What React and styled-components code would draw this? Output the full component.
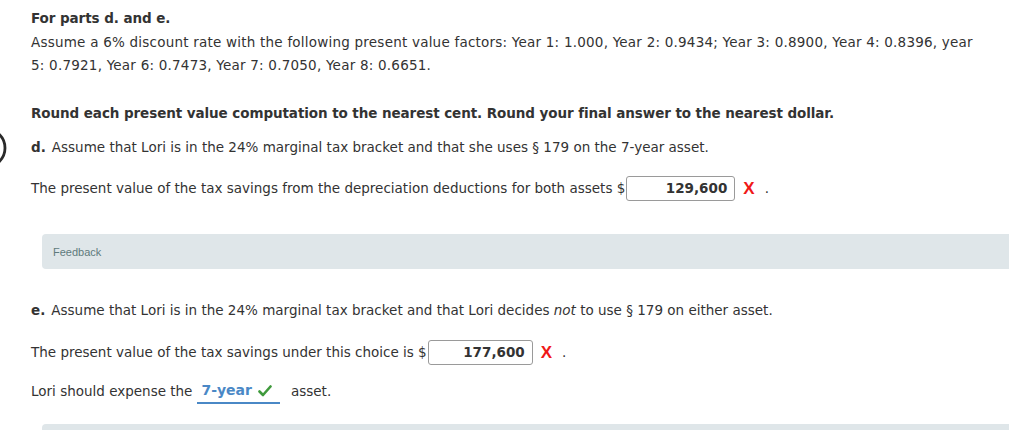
import React from "react";
import styled, { createGlobalStyle } from "styled-components";

const Global = createGlobalStyle`
  html, body { margin: 0; padding: 0; background: #fff; }
  body { font-family: "DejaVu Sans", Verdana, sans-serif; font-size: 13.5px; color: #333; overflow: hidden; }
`;

const Page = styled.div`
  position: relative;
  width: 1009px;
  height: 430px;
  padding: 7px 0 0 31px;
  box-sizing: border-box;
  overflow: hidden;
`;

const Arc = styled.svg`
  position: absolute;
  left: 0;
  top: 126px;
`;

const Heading = styled.div`
  font-weight: bold;
  line-height: 23px;
  letter-spacing: -0.08px;
  margin-top: ${(p) => p.$mt || 0}px;
`;

const Para = styled.div`
  line-height: 23px;
  letter-spacing: 0.22px;
  margin-top: ${(p) => p.$mt || 0}px;
  width: ${(p) => p.$w || "auto"};
`;

const Row = styled.div`
  display: flex;
  align-items: center;
  line-height: 23px;
  margin-top: ${(p) => p.$mt || 0}px;
  white-space: nowrap;
`;

const Label = styled.b`
  margin-right: 6px;
`;

const Input = styled.div`
  box-sizing: border-box;
  width: ${(p) => p.$w}px;
  height: 25px;
  border: 1px solid #9a9a9a;
  border-radius: 3px;
  text-align: right;
  padding-right: 7px;
  font-weight: bold;
  line-height: 23px;
  color: #333;
  margin-left: 1px;
`;

const Cross = styled.span`
  font-family: "Liberation Sans", Arial, sans-serif;
  font-weight: 900;
  font-size: 17px;
  color: #f01818;
  margin-left: 8px;
  margin-right: 10px;
`;

const Feedback = styled.div`
  margin: ${(p) => p.$mt}px 0 0 11px;
  height: 35px;
  width: 990px;
  background: #dfe6e9;
  border-radius: 4px 0 0 4px;
  display: flex;
  align-items: center;
  padding-left: 11px;
  box-sizing: border-box;
  font-family: "Liberation Sans", Arial, sans-serif;
  font-size: 11px;
  color: #5e7a7c;
`;

const Choice = styled.span`
  display: inline-flex;
  align-items: center;
  gap: 6px;
  margin: 0 11px 0 5px;
  padding: 0 8px 0 4px;
  border-bottom: 2px solid #4a88c6;
  color: #4a88c6;
  font-weight: bold;
  font-size: 14px;
  height: 25px;
  box-sizing: border-box;
`;

const Check = () => (
  <svg width="14" height="12" viewBox="0 0 14 12">
    <path d="M1.5 6.5 L5 10 L12.5 1.5" fill="none" stroke="#3f9a3c" strokeWidth="2.6" strokeLinecap="round" strokeLinejoin="round" />
  </svg>
);

export default function App() {
  return (
    <Page>
      <Global />
      <Arc width="10" height="44" viewBox="0 0 10 44">
        <circle cx="-14" cy="22" r="19" fill="none" stroke="#2a2a2a" strokeWidth="2.8" />
      </Arc>
      <Heading>For parts d. and e.</Heading>
      <Para $mt={1} $w="950px">
        Assume a 6% discount rate with the following present value factors: Year 1: 1.000, Year 2: 0.9434; Year 3: 0.8900, Year 4: 0.8396, year 5: 0.7921, Year 6: 0.7473, Year 7: 0.7050, Year 8: 0.6651.
      </Para>
      <Heading $mt={25}>Round each present value computation to the nearest cent. Round your final answer to the nearest dollar.</Heading>
      <Row $mt={11}>
        <Label>d.</Label>Assume that Lori is in the 24% marginal tax bracket and that she uses § 179 on the 7-year asset.
      </Row>
      <Row $mt={17}>
        The present value of the tax savings from the depreciation deductions for both assets $
        <Input $w={109}>129,600</Input>
        <Cross>X</Cross>.
      </Row>
      <Feedback $mt={33}>Feedback</Feedback>
      <Row $mt={30}>
        <Label>e.</Label>Assume that Lori is in the 24% marginal tax bracket and that Lori decides&nbsp;<i>not</i>&nbsp;to use § 179 on either asset.
      </Row>
      <Row $mt={18}>
        The present value of the tax savings under this choice is $
        <Input $w={105}>177,600</Input>
        <Cross>X</Cross>.
      </Row>
      <Row $mt={14}>
        Lori should expense the
        <Choice>7-year <Check /></Choice>
        asset.
      </Row>
      <Feedback $mt={20}> </Feedback>
    </Page>
  );
}
